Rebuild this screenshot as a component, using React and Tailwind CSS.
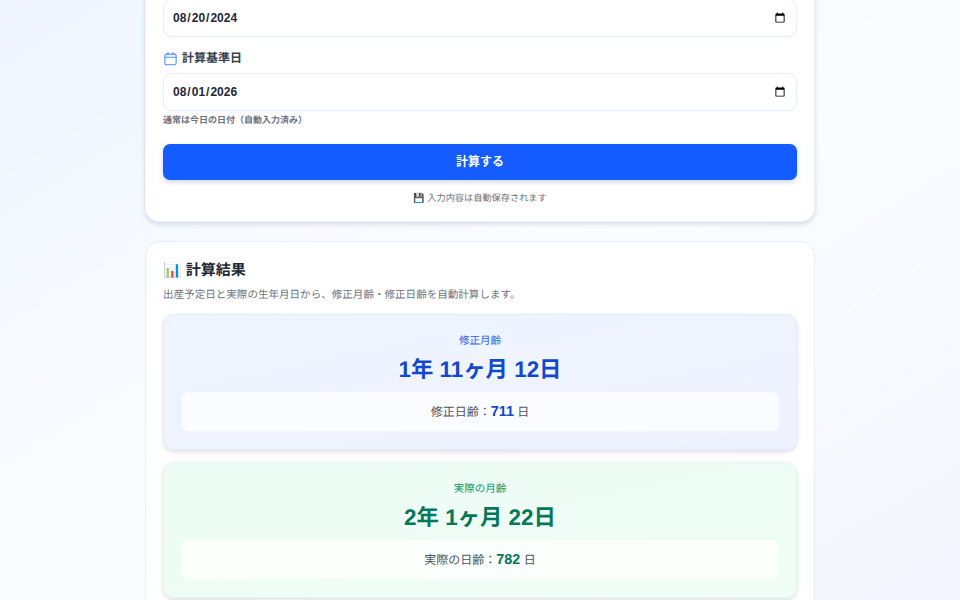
import React from 'react';

const font = 'font-["Liberation_Sans","Noto_Sans_CJK_JP",sans-serif] [text-rendering:geometricPrecision]';

function CalendarIcon() {
  return (
    <svg width="15" height="15" viewBox="0 0 24 24" fill="none" stroke="#4f8ef7" strokeWidth="1.7" strokeLinecap="round" strokeLinejoin="round" className="mt-0.5">
      <rect x="3" y="5" width="18" height="17" rx="2.5" />
      <path d="M3 10h18M8 2.5V6M16 2.5V6" />
    </svg>
  );
}

function DateField({ value }) {
  return (
    <input
      type="date"
      defaultValue={value}
      className="block h-[38px] w-full rounded-[9px] border border-[#e8edf8] bg-white pl-[8px] pr-[8px] text-[12px] font-bold text-[#1f2937] shadow-[0_1px_2px_rgba(30,64,175,0.04)]"
    />
  );
}

function ResultBox({ title, value, dayLabel, days, tone }) {
  const green = tone === 'green';
  return (
    <div className={`rounded-[11px] border bg-gradient-to-br px-[17px] pt-[18px] pb-[18px] text-center shadow-[0_2px_4px_rgba(30,41,59,0.16)] ${green ? 'border-[#e3f8ef] from-[#ecfdf5] to-[#effdf6]' : 'border-[#e4ebfa] from-[#eff6ff] to-[#eef2ff]'}`}>
      <div className={`text-[10.56px] leading-[16px] ${green ? 'text-[#059669]' : 'text-[#2563eb]'}`}>{title}</div>
      <div className={`mt-[4px] text-[22.4px] leading-[34px] font-bold ${green ? 'text-[#047857]' : 'text-[#1347cd]'}`}>{value}</div>
      <div className="mt-[5px] flex h-[39px] items-center justify-center rounded-[7px] bg-white/70 pt-[2px] text-[12px] text-[#4b5563]">
        <span>
          {dayLabel}：<span className={`text-[14.4px] font-bold ${green ? 'text-[#047857]' : 'text-[#1347cd]'}`}>{days}</span> 日
        </span>
      </div>
    </div>
  );
}

export default function App() {
  return (
    <div className={`${font} h-[600px] w-[960px] overflow-hidden bg-gradient-to-br from-[#eff5ff] via-[#fbfcff] to-[#f3f6fe]`}>
      <div className="mx-auto -mt-[60px] flex w-[670px] flex-col gap-[19px]">
        <section className="rounded-[14px] border border-[#eef2fb] bg-white px-[17px] pt-[58px] pb-[16px] shadow-[0_2px_5px_rgba(30,41,59,0.16)]">
          <DateField value="2024-08-20" />
          <label className="mt-[10px] flex h-[21px] items-center gap-[4px] text-[12px] font-bold text-[#374151]">
            <CalendarIcon />
            計算基準日
          </label>
          <div className="mt-[5px]">
            <DateField value="2026-08-01" />
          </div>
          <p className="mt-[2px] text-[9px] leading-[14px] font-bold text-[#6b7280]">通常は今日の日付（自動入力済み）</p>
          <button className="mt-[17px] block h-[36px] w-full rounded-[7px] bg-[#145cff] text-[12px] font-bold text-white shadow-[0_2px_5px_rgba(30,64,175,0.22)]">
            計算する
          </button>
          <p className="mt-[11px] text-center text-[9.2px] leading-[14px] text-[#6b7280]">💾 入力内容は自動保存されます</p>
        </section>

        <section className="rounded-[14px] border border-[#e8eefb] bg-white px-[17px] pt-[17px] pb-[18px]">
          <h2 className="text-[15px] leading-[24px] font-bold text-[#1f2937]">📊 計算結果</h2>
          <p className="mt-[4px] text-[10.56px] leading-[16px] text-[#6b7280]">出産予定日と実際の生年月日から、修正月齢・修正日齢を自動計算します。</p>
          <div className="mt-[11px] flex flex-col gap-3">
            <ResultBox title="修正月齢" value="1年 11ヶ月 12日" dayLabel="修正日齢" days="711" tone="blue" />
            <ResultBox title="実際の月齢" value="2年 1ヶ月 22日" dayLabel="実際の日齢" days="782" tone="green" />
          </div>
        </section>
      </div>
    </div>
  );
}
